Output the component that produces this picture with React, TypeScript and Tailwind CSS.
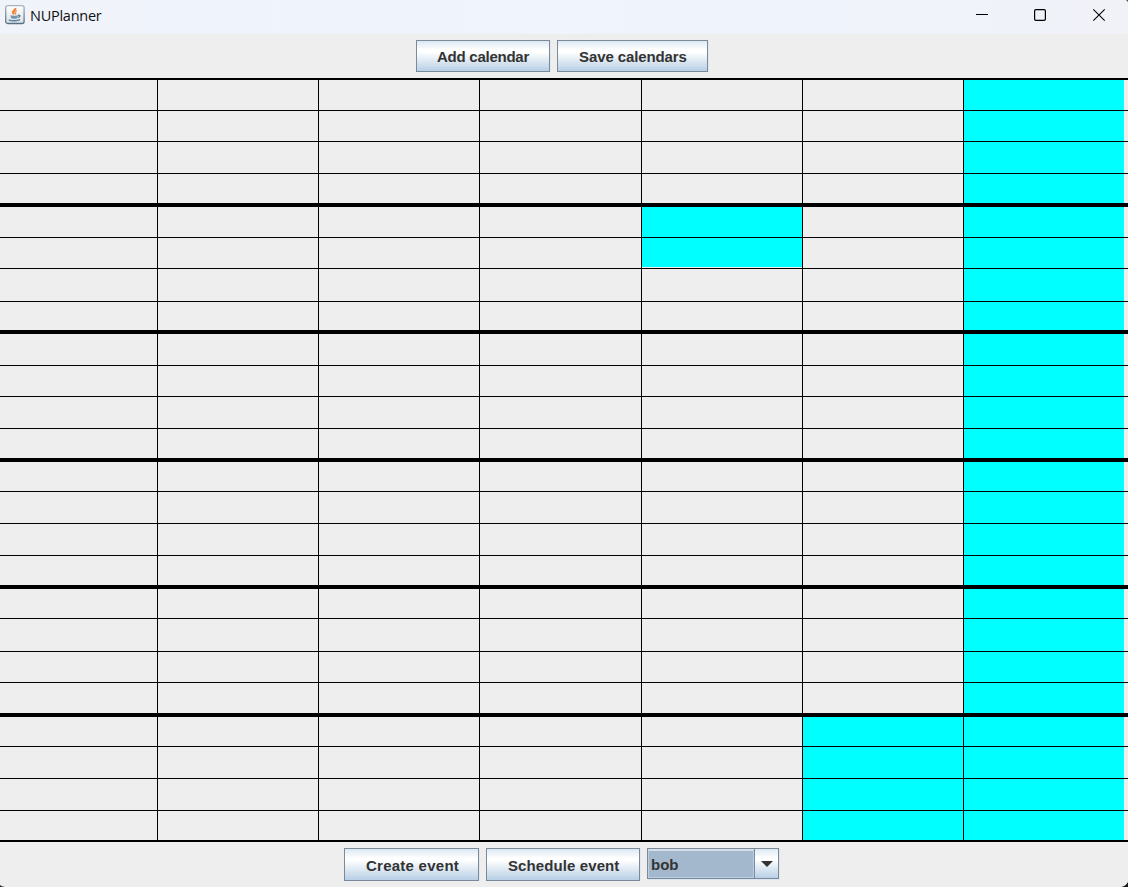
type Row = { height: number; line: number };

const rows: Row[] = [
  [30, 1], [30, 1], [31, 1], [29, 4],
  [30, 1], [30, 1], [32, 1], [28, 4],
  [31, 1], [30, 1], [31, 1], [29, 4],
  [29, 1], [31, 1], [31, 1], [29, 4],
  [29, 1], [32, 1], [30, 1], [30, 4],
  [29, 1], [31, 1], [31, 1], [29, 2],
].map(([height, line]) => ({ height, line }));

const dayClasses = [
  "w-[158px] border-r",
  "w-[161px] border-r",
  "w-[161px] border-r",
  "w-[162px] border-r",
  "w-[161px] border-r",
  "w-[161px] border-r",
  "w-[160px]",
];

const isBusy = (hour: number, day: number) =>
  day === 6 || (day === 5 && hour >= 20) || (day === 4 && (hour === 4 || hour === 5));

function MetalButton({ label, className }: { label: string; className: string }) {
  return (
    <button
      className={`flex shrink-0 items-center whitespace-nowrap border border-[#7a8a99] bg-[linear-gradient(to_bottom,#dde8f3_0%,#ffffff_30%,#ffffff_36%,#b8cfe5_100%)] pt-[2px] font-['Liberation_Sans',sans-serif] text-[15px] font-bold leading-5 text-[#333333] shadow-[1px_0_0_#dfe8f1] ${className}`}
    >
      {label}
    </button>
  );
}

function JavaIcon() {
  return (
    <svg width="20" height="20" viewBox="0 0 20 20" className="shrink-0">
      <defs>
        <linearGradient id="frame" x1="0" y1="0" x2="0" y2="1">
          <stop offset="0" stopColor="#a3b3c2" />
          <stop offset="1" stopColor="#557089" />
        </linearGradient>
        <linearGradient id="face" x1="0" y1="0" x2="0" y2="1">
          <stop offset="0" stopColor="#ffffff" />
          <stop offset="1" stopColor="#dedfe1" />
        </linearGradient>
      </defs>
      <rect x="0.7" y="0.7" width="18.4" height="17.8" rx="2" fill="url(#face)" stroke="url(#frame)" strokeWidth="1.3" />
      <path d="M10.300 3.200C11 4.900 7.400 5.900 7.900 7.600c.3.700.9 1 1.300 1.700" fill="none" stroke="#ed7e2b" strokeWidth="2.1" />
      <path d="M11.700 5.500c-2 1-2 1.600-1.200 2.500.4.500.2 1-.4 1.500" fill="none" stroke="#ed9a5a" strokeWidth="1.5" />
      <path d="M5.300 10.200c1.900.6 6 .6 7.900 0l-.9 3c-1.500.8-4.600.8-6 0z" fill="#7394ad" />
      <path d="M3.800 14.800c2.500 1.300 8.700 1.300 11.200-.1M13 10.400c2.600-.6 2.400 1.700.1 2.100" fill="none" stroke="#55809f" strokeWidth="1.400" />
    </svg>
  );
}

function TitleBar() {
  return (
    <header className="flex h-[34px] shrink-0 items-start justify-between bg-[linear-gradient(to_right,#f0f3fa,#eff4fd_50%,#f0f2f8)]">
      <div className="flex gap-[5px] pl-[5px] pt-[5px]">
        <JavaIcon />
        <h1 className="whitespace-nowrap font-['Open_Sans',sans-serif] text-[14.5px] leading-[21px] tracking-[-0.25px] text-[#111111]">
          NUPlanner
        </h1>
      </div>
      <svg width="152" height="34" fill="none" stroke="#000000" strokeWidth="1.2">
        <path d="M0 14.5h12" strokeWidth="1" />
        <rect x="58.6" y="9.6" width="10.8" height="10.8" rx="1.3" />
        <path d="M117.3 9.3l11.4 11.4M128.7 9.3l-11.4 11.4" strokeWidth="1.1" />
      </svg>
    </header>
  );
}

function Schedule() {
  return (
    <main className="shrink-0 border-t-2 border-black">
      {rows.map((row, hour) => (
        <div
          key={hour}
          className="box-content flex border-b border-black"
          style={{ height: row.height, borderBottomWidth: row.line }}
        >
          {dayClasses.map((dayClass, day) => (
            <div
              key={day}
              className={`shrink-0 border-black ${dayClass} ${isBusy(hour, day) ? "bg-[#00ffff]" : ""} ${
                hour === 5 && day === 4 ? "bg-[linear-gradient(to_top,#eeeeee_1px,#00ffff_1px)]" : ""
              }`}
            />
          ))}
        </div>
      ))}
    </main>
  );
}

function UserSelect() {
  return (
    <div className="flex h-[31px] w-[132px] shrink-0 border border-[#7a8a99] shadow-[1px_1px_0_#dbe5ef]">
      <div className="flex flex-1 items-center border border-t-2 border-[#b8cfe5] border-t-[#d3e0ec] bg-[#a3b8cc] pl-[2px] pt-[1px] font-['Liberation_Sans',sans-serif] text-[15px] font-bold leading-5 text-[#333333]">
        bob
      </div>
      <div className="flex w-[24px] items-center justify-center border-l border-[#7a8a99] bg-[linear-gradient(to_bottom,#dde8f3_0%,#ffffff_30%,#ffffff_36%,#b8cfe5_100%)]">
        <svg width="12" height="6" className="shrink-0">
          <path d="M0 0h12L6 6z" fill="#333333" />
        </svg>
      </div>
    </div>
  );
}

export default function App() {
  return (
    <div className="relative flex h-[887px] w-[1128px] flex-col overflow-hidden bg-[#eeeeee]">
      <TitleBar />
      <div className="flex h-[44px] shrink-0 items-start gap-[7px] pl-[416px] pt-[6px]">
        <MetalButton label="Add calendar" className="h-[32px] w-[134px] pl-[20px] tracking-[-0.25px]" />
        <MetalButton label="Save calendars" className="h-[32px] w-[151px] pl-[21px] tracking-[-0.1px]" />
      </div>
      <Schedule />
      <footer className="flex h-[45px] shrink-0 items-start gap-[7px] pl-[344px] pt-[6px]">
        <MetalButton label="Create event" className="h-[33px] w-[135px] pl-[21px] tracking-[0.25px]" />
        <MetalButton label="Schedule event" className="h-[33px] w-[154px] pl-[21px] tracking-[0.1px]" />
        <UserSelect />
      </footer>
      <svg width="8" height="5" className="absolute bottom-0 right-0">
        <path d="M8 0v5H1.5Q6 4 8 0z" fill="#17171f" />
      </svg>
      <svg width="5" height="2" className="absolute bottom-0 left-0">
        <path d="M0 0v2h5Q1 1.500 0 0z" fill="#222222" />
      </svg>
      <svg width="2" height="2" className="absolute right-0 top-0">
        <path d="M0 0h2v2z" fill="#555555" />
      </svg>
    </div>
  );
}
